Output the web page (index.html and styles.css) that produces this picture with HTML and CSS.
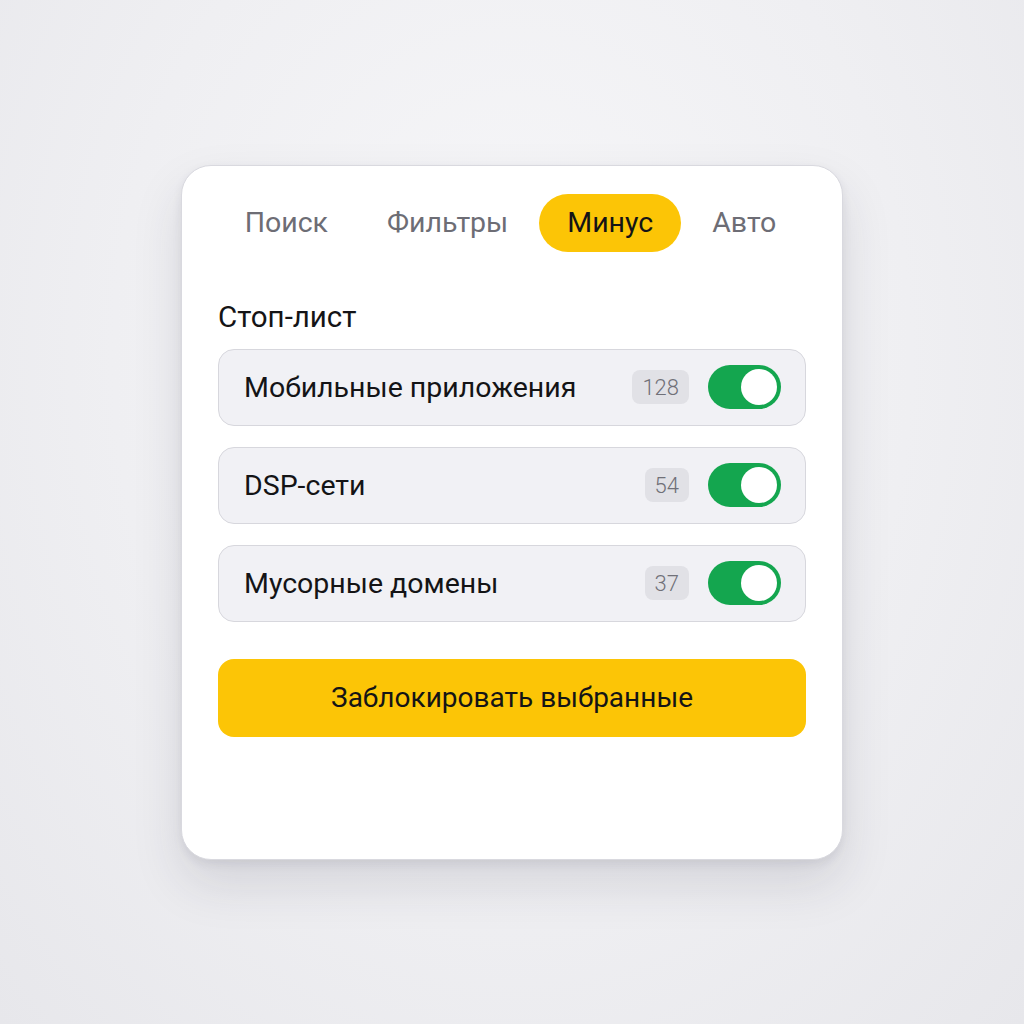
FILE: index.html
```html
<!DOCTYPE html>
<html lang="ru">
<head>
<meta charset="utf-8">
<link rel="stylesheet" href="styles.css">
</head>
<body>
<div class="card">
  <nav class="tabs">
    <span class="tab">Поиск</span>
    <span class="tab">Фильтры</span>
    <span class="tab active">Минус</span>
    <span class="tab">Авто</span>
  </nav>
  <div class="title">Стоп-лист</div>
  <div class="list">
    <div class="row">
      <span class="label">Мобильные приложения</span>
      <span class="badge">128</span>
      <span class="toggle"><span class="knob"></span></span>
    </div>
    <div class="row">
      <span class="label">DSP-сети</span>
      <span class="badge">54</span>
      <span class="toggle"><span class="knob"></span></span>
    </div>
    <div class="row">
      <span class="label">Мусорные домены</span>
      <span class="badge">37</span>
      <span class="toggle"><span class="knob"></span></span>
    </div>
  </div>
  <button class="btn">Заблокировать выбранные</button>
</div>
</body>
</html>
```

FILE: styles.css
```css
* { box-sizing: border-box; }
html, body { margin: 0; height: 100%; }
body {
  display: flex;
  align-items: center;
  justify-content: center;
  background: radial-gradient(ellipse at 50% 35%, #f7f7f9 0%, #efeff2 55%, #e7e7eb 100%);
  font-family: Roboto, "Noto Sans", sans-serif;
  color: #141416;
}
.card {
  width: 662px;
  height: 695px;
  background: #fff;
  border: 1px solid #d9d9df;
  border-radius: 30px;
  padding: 28px 36px 0;
  box-shadow: 0 24px 50px rgba(40, 40, 60, 0.13), 0 4px 10px rgba(40, 40, 60, 0.08);
}
.tabs {
  display: flex;
  justify-content: center;
  gap: 3px;
  height: 58px;
  margin-left: -3px;
}
.tab {
  display: flex;
  align-items: center;
  padding: 0 28px;
  height: 58px;
  border-radius: 29px;
  font-size: 28.5px;
  color: #6d6d75;
}
.tab.active {
  background: #fcc506;
  color: #141416;
}
.title {
  margin-top: 49px;
  font-size: 29.5px;
  line-height: 32px;
  color: #141416;
}
.list {
  margin-top: 16px;
  display: flex;
  flex-direction: column;
  gap: 21px;
}
.row {
  display: flex;
  align-items: center;
  height: 77px;
  padding: 0 24px 0 25px;
  background: #f1f1f5;
  border: 1.5px solid #d7d7dd;
  border-radius: 16px;
}
.label {
  flex: 1;
  font-size: 28.5px;
  color: #141416;
}
.badge {
  height: 34px;
  padding: 0 10px;
  display: flex;
  align-items: center;
  background: #e1e1e6;
  border-radius: 8px;
  font-size: 22px;
  font-weight: 300;
  color: #707078;
}
.toggle {
  margin-left: 19px;
  width: 73px;
  height: 44px;
  border-radius: 22px;
  background: #14a64f;
  display: flex;
  align-items: center;
  justify-content: flex-end;
  padding: 0 4px;
}
.knob {
  width: 36px;
  height: 36px;
  border-radius: 50%;
  background: #fff;
}
.btn {
  display: block;
  width: 100%;
  margin-top: 37px;
  height: 78px;
  border: 0;
  border-radius: 16px;
  background: #fcc506;
  font-family: Roboto, "Noto Sans", sans-serif;
  font-size: 28px;
  color: #141416;
}
```
